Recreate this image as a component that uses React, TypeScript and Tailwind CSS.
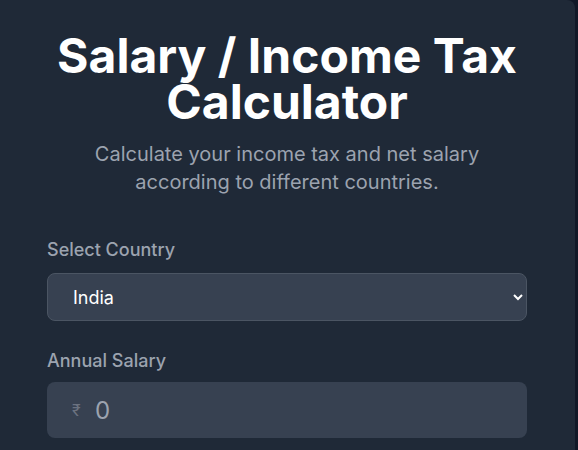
import React, { useState } from 'react';

export default function App() {
  const [country, setCountry] = useState('India');
  const [salary, setSalary] = useState('');

  return (
    <div className="h-screen overflow-hidden bg-[#111827]" style={{ fontFamily: 'Inter, "Noto Sans", sans-serif' }}>
      <div className="h-full w-[575px] bg-[#1f2937] rounded-tr-lg pl-[47px] pr-12 pt-[33px]">
        <h1 className="text-center text-[48px] leading-[46px] font-bold text-white">
          Salary / Income Tax Calculator
        </h1>
        <p className="mx-auto mt-[15px] max-w-md text-center text-xl leading-7 text-[#9ca3af]">
          Calculate your income tax and net salary according to different countries.
        </p>

        <div className="mt-[42px]">
          <label className="block text-lg leading-6 font-medium text-[#9ca3af]">Select Country</label>
          <select
            value={country}
            onChange={(e) => setCountry(e.target.value)}
            className="mt-[11px] h-12 w-full rounded-lg border border-[#4b5563] bg-[#374151] pl-[21px] pr-1 text-lg text-white outline-none"
          >
            <option>India</option>
            <option>United States</option>
            <option>United Kingdom</option>
            <option>Canada</option>
          </select>
        </div>

        <div className="mt-[28px]">
          <label className="block text-lg leading-6 font-medium text-[#9ca3af]">Annual Salary</label>
          <div className="relative mt-[9px]">
            <span className="absolute left-[25px] top-1/2 -translate-y-1/2 text-base text-[#6b7280]">₹</span>
            <input
              type="number"
              value={salary}
              onChange={(e) => setSalary(e.target.value)}
              placeholder="0"
              className="h-14 w-full rounded-lg bg-[#374151] pl-12 pr-4 text-2xl text-white placeholder:text-[#9ca3af] outline-none"
            />
          </div>
        </div>
      </div>
    </div>
  );
}
